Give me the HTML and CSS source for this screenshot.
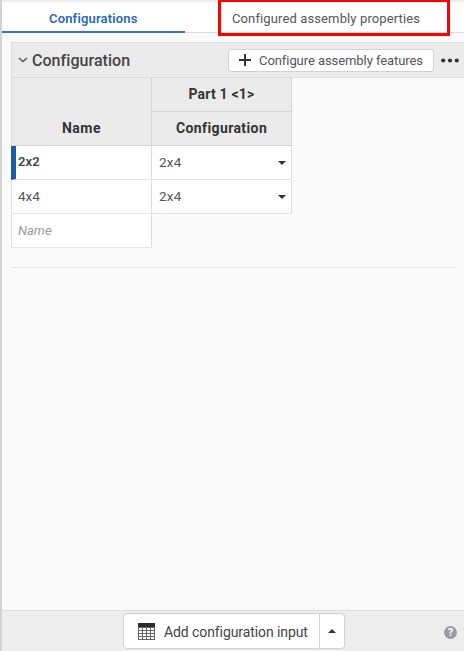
FILE: index.html
```html
<!DOCTYPE html>
<html lang="en">
<head>
<meta charset="utf-8">
<title>Configurations</title>
<link rel="stylesheet" href="styles.css">
</head>
<body>
<div class="panel">
  <nav class="tabs">
    <div class="tab active"><span>Configurations</span></div>
    <div class="tab second"><span>Configured assembly properties</span><i class="highlight"></i></div>
  </nav>
  <main>
    <header class="section-head">
      <svg class="chevron" width="10" height="6" viewBox="0 0 10 6"><path d="M1 1l4 3.6L9 1" fill="none" stroke="#555" stroke-width="1.5"/></svg>
      <h2>Configuration</h2>
      <button class="features"><svg width="12" height="12" viewBox="0 0 12 12"><path d="M6 0v12M0 6h12" stroke="#333" stroke-width="2"/></svg><span>Configure assembly features</span></button>
      <svg class="dots" width="18" height="5" viewBox="0 0 18 5" fill="#333"><circle cx="2.2" cy="2.5" r="2.1"/><circle cx="9" cy="2.5" r="2.1"/><circle cx="15.8" cy="2.5" r="2.1"/></svg>
    </header>
    <div class="table">
      <div class="th name"><span class="t-name">Name</span></div>
      <div class="th"><span class="t-part">Part 1 &lt;1&gt;</span></div>
      <div class="th"><span class="t-conf">Configuration</span></div>
      <div class="td selected"><b>2x2</b></div>
      <div class="td value"><span>2x4</span><svg width="8" height="4" viewBox="0 0 8 4"><path d="M0 0h8L4 4z" fill="#333"/></svg></div>
      <div class="td key"><span>4x4</span></div>
      <div class="td value"><span>2x4</span><svg width="8" height="4" viewBox="0 0 8 4"><path d="M0 0h8L4 4z" fill="#333"/></svg></div>
      <div class="td key last"><em>Name</em></div>
    </div>
    <hr>
  </main>
  <footer>
    <div class="split">
      <button class="add">
        <svg width="17" height="17" viewBox="0 0 17 17"><path d="M0 0h17v17H0z" fill="#666"/><path d="M0 0h17v4H0z" fill="#2b2b2b"/><path d="M1 5h3v2H1zM5 5h3v2H5zM9 5h3v2H9zM13 5h3v2h-3zM1 8h3v2H1zM5 8h3v2H5zM9 8h3v2H9zM13 8h3v2h-3zM1 11h3v2H1zM5 11h3v2H5zM9 11h3v2H9zM13 11h3v2h-3zM1 14h3v2H1zM5 14h3v2H5zM9 14h3v2H9zM13 14h3v2h-3z" fill="#fff"/></svg>
        <span>Add configuration input</span>
      </button>
      <button class="up"><svg width="8" height="4" viewBox="0 0 8 4"><path d="M0 4h8L4 0z" fill="#333"/></svg></button>
    </div>
    <span class="help">?</span>
  </footer>
</div>
</body>
</html>
```

FILE: styles.css
```css
* { box-sizing: border-box; }
body { margin: 0; font-family: Roboto, "Liberation Sans", sans-serif; color: #444; }
button { font: inherit; color: inherit; margin: 0; padding: 0; background: #fff; border: 1px solid #d2d2d2; }
svg { display: block; flex: none; }
span, b, em, h2 { white-space: nowrap; }
.panel { width: 464px; height: 651px; display: flex; flex-direction: column; background: #fafafa; border-left: 2px solid #d2d2d2; overflow: hidden; }
.tabs { height: 33px; flex: none; display: flex; background: #fff; border-top: 2px solid #eee; font-size: 13px; line-height: 16px; }
.tab { padding-top: 9px; border-bottom: 1px solid #ddd; }
.active { width: 183px; padding-left: 47px; color: #2b68b2; font-weight: 600; border-bottom: 2px solid #3975b8; }
.active span { letter-spacing: 0.16px; }
.second { flex: 1; padding-left: 47px; position: relative; color: #555; }
.second span { letter-spacing: 0.12px; }
.highlight { position: absolute; left: 33px; top: -2px; width: 232px; height: 36px; border: 3px solid #f00; border-top-width: 2px; }
main { flex: 1; padding: 9px 0 0 9px; }
.section-head { height: 36px; display: flex; align-items: center; padding-left: 6px; background: #ebebeb; border: 1px solid #ddd; border-right: 0; }
.section-head h2 { margin: 2px 0 0 4px; width: 196px; font-size: 16px; line-height: 20px; font-weight: 500; letter-spacing: 0.05px; color: #444; }
.features { width: 206px; height: 23px; display: flex; align-items: center; gap: 8px; padding-left: 10px; border-radius: 3px; font-size: 13px; color: #555; }
.features span { letter-spacing: -0.07px; }
.dots { margin: 1px 0 0 7px; }
.table { width: 281px; display: grid; grid-template-columns: 141px 140px; grid-template-rows: 34px 34px 34px 34px 34px; }
.th { display: flex; align-items: center; justify-content: center; background: #ebebeb; border-right: 1px solid #d5d5d5; border-bottom: 1px solid #d5d5d5; font-size: 14px; font-weight: 700; color: #333; padding: 0 0 2px; }
.t-name { letter-spacing: 0.5px; }
.t-part { letter-spacing: 0.2px; }
.t-conf { letter-spacing: 0.4px; }
.name { grid-row: 1 / 3; align-items: flex-end; padding-bottom: 9px; border-left: 1px solid #ddd; }
.td { display: flex; align-items: center; background: #fff; border-right: 1px solid #ddd; border-bottom: 1px solid #e5e5e5; font-size: 13.5px; color: #555; }
.key { border-left: 1px solid #e2e2e2; padding: 0 0 2px 6px; }
.last { padding-bottom: 0; }
.selected { border-left: 5px solid #1e5ba8; padding: 0 0 3px 2px; color: #444; font-size: 13px; }
.selected b { font-weight: 600; letter-spacing: 0.1px; }
.value { padding: 0 5px 0 7px; justify-content: space-between; }
.value span { margin-top: -1px; letter-spacing: 0.2px; }
.key em { color: #999; font-size: 13px; letter-spacing: 0; }
hr { height: 1px; margin: 19px 7px 0 0; border: 0; background: #e5e5e5; }
footer { height: 41px; flex: none; display: flex; align-items: flex-start; background: #ededed; border-top: 1px solid #ddd; padding: 2px 0 0 121px; }
.split { width: 222px; height: 36px; display: flex; }
.add { width: 197px; display: flex; align-items: center; gap: 9px; padding: 1px 0 0 14px; border-radius: 4px 0 0 4px; font-size: 14px; color: #444; }
.add span { letter-spacing: -0.09px; }
.up { flex: 1; border-left: 0; border-radius: 0 4px 4px 0; display: flex; align-items: center; justify-content: center; }
.help { margin: 13px 0 0 99px; width: 13px; height: 13px; border-radius: 50%; background: #979ca4; color: #fff; text-align: center; font-size: 11px; line-height: 13px; font-weight: 700; }
```
